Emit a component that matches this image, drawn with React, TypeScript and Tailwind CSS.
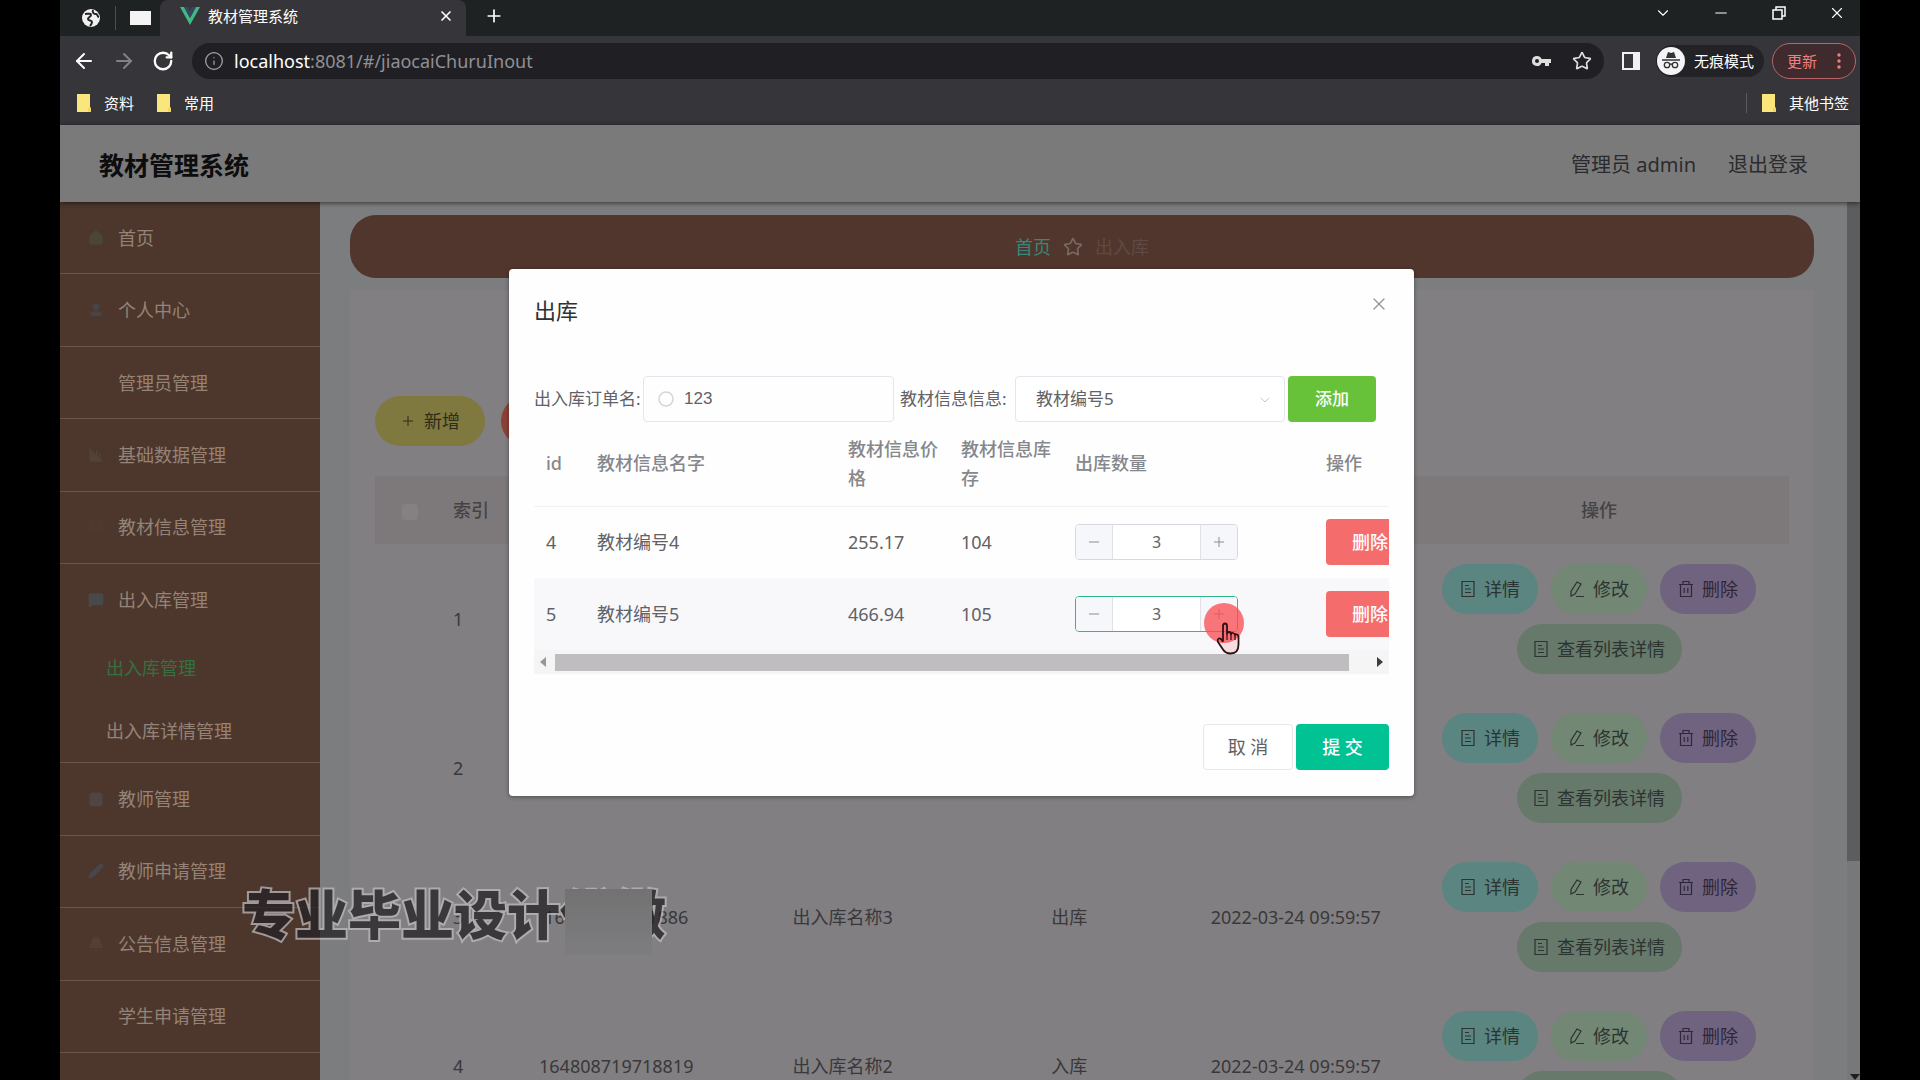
import React, { useState } from 'react';
import {
  ArrowLeft, ArrowRight, RotateCw, Info, Star, X, Plus, Minus, ChevronDown,
  House, User, ChartColumn, BookOpen, MessageSquare, Contact, Pencil, Bell,
} from 'lucide-react';

const topMenu = [
  { label: '首页', icon: House, color: 'text-[#4a4638]' },
  { label: '个人中心', icon: User, color: 'text-[#464549]' },
  { label: '管理员管理', icon: null, color: '' },
  { label: '基础数据管理', icon: ChartColumn, color: 'text-[#524336]' },
  { label: '教材信息管理', icon: BookOpen, color: 'text-[#4f392d]' },
];

const bottomMenu = [
  { label: '教师管理', icon: Contact, color: 'text-[#4d4546]' },
  { label: '教师申请管理', icon: Pencil, color: 'text-[#45484d]' },
  { label: '公告信息管理', icon: Bell, color: 'text-[#523f36]' },
  { label: '学生申请管理', icon: null, color: '' },
];

const records = [
  { id: 1, order: '', name: '', type: '', time: '' },
  { id: 2, order: '', name: '', type: '', time: '' },
  { id: 3, order: '16480871971886', name: '出入库名称3', type: '出库', time: '2022-03-24 09:59:57' },
  { id: 4, order: '164808719718819', name: '出入库名称2', type: '入库', time: '2022-03-24 09:59:57' },
];

const books = [
  { id: 4, name: '教材编号4', price: '255.17', stock: 104, active: false },
  { id: 5, name: '教材编号5', price: '466.94', stock: 105, active: true },
];

const Folder = () => (
  <svg viewBox="0 0 16 20" className="w-4 h-5" aria-hidden="true">
    <path d="M1 1h13v13l1 1v4H1z" fill="#fbe67b" />
    <path d="M12 15h3v4h-3z" fill="#f3d65c" />
  </svg>
);

const DocIcon = () => (
  <svg viewBox="0 0 16 18" className="flex-none w-4 h-[18px]" fill="none" stroke="currentColor" strokeWidth="1.2" aria-hidden="true">
    <path d="M2 1.500h12v15H2zM5 5.500h4M5 9h6M5 12.500h6" />
  </svg>
);

const EditIcon = () => (
  <svg viewBox="0 0 16 18" className="flex-none w-4 h-[18px]" fill="none" stroke="currentColor" strokeWidth="1.2" aria-hidden="true">
    <path d="M8 2l4 2-6 10-4 2V11.500zM7 16.500h8" />
  </svg>
);

const TrashIcon = () => (
  <svg viewBox="0 0 16 18" className="flex-none w-4 h-[18px]" fill="none" stroke="currentColor" strokeWidth="1.2" aria-hidden="true">
    <path d="M1 4.500h14M5 4.500v-3h6v3M2.500 4.500v12h11v-12M6.200 8v5M9.800 8v5" />
  </svg>
);

const BrowserBar = () => (
  <div className="bg-[#36363a] text-[15px] leading-5 text-white">
    {/* Tab strip */}
    <div className="flex items-center h-9 bg-[#1e2222]">
      <div className="flex items-center h-full pl-[21px]">
        <svg viewBox="0 0 20 20" className="w-5 h-5" aria-hidden="true">
          <circle cx="10" cy="10" r="9" fill="#f1f1f1" />
          <path d="M4 6c3 0 6-1 6 1s-3 2-3 4 4 1 4 3-1 3-2 4M12 2c-1 3 1 4 3 4s1 3 3 3" fill="none" stroke="#222" strokeWidth="2" />
        </svg>
        <span className="ml-[14px] w-px h-6 bg-[#4b4d4f]" />
        <svg viewBox="0 0 22 16" className="ml-[14px] w-[22px] h-4" aria-hidden="true">
          <rect x="0" y="1" width="21" height="14" fill="#f4f4f4" />
        </svg>
      </div>
      <div className="ml-2 flex items-center flex-none h-full w-[306px] pl-5 pr-3 rounded-t-lg bg-[#36363a]">
        <svg viewBox="0 0 20 18" className="w-5 h-[18px] -mt-1" aria-hidden="true">
          <path d="M0 0h4l6 11L16 0h4L10 18z" fill="#42b883" />
          <path d="M4 0h4l2 4 2-4h4l-6 11z" fill="#35495e" />
        </svg>
        <span className="ml-2 -mt-1">教材管理系统</span>
        <button aria-label="关闭标签页" className="ml-auto -mt-1"><X className="w-4 h-4" strokeWidth={2.5} /></button>
      </div>
      <button aria-label="新标签页" className="ml-[18px] -mt-1"><Plus className="w-5 h-5" /></button>
      <div className="ml-auto flex items-center gap-10 pr-[14px] pb-[10px]">
        <button aria-label="搜索标签页"><ChevronDown className="w-[18px] h-[18px]" strokeWidth={1.5} /></button>
        <button aria-label="最小化"><Minus className="w-[18px] h-[18px]" strokeWidth={1.5} /></button>
        <button aria-label="还原">
          <svg viewBox="0 0 18 18" className="w-[18px] h-[18px]" fill="none" stroke="currentColor" strokeWidth="1.5">
            <path d="M3 6h9v9H3zM6 6V3h9v9h-3" />
          </svg>
        </button>
        <button aria-label="关闭"><X className="w-[18px] h-[18px]" strokeWidth={1.5} /></button>
      </div>
    </div>

    {/* Address row */}
    <div className="flex items-center h-[50px] pl-3 pr-1">
      <button aria-label="后退"><ArrowLeft className="w-6 h-6" /></button>
      <button aria-label="前进" className="ml-4 text-[#818286]"><ArrowRight className="w-6 h-6" /></button>
      <button aria-label="重新加载" className="ml-4"><RotateCw className="w-[22px] h-[22px]" strokeWidth={2.5} /></button>
      <div className="ml-[18px] mr-[18px] flex flex-1 items-center h-9 px-3 rounded-full bg-[#202024]">
        <Info className="w-5 h-5 text-[#a5a6a9]" strokeWidth={1.5} />
        <span className="ml-[10px] text-lg leading-6 text-[#8f9094]">
          <span className="text-white">localhost</span>:8081/#/jiaocaiChuruInout
        </span>
        <svg viewBox="0 0 20 12" className="ml-auto w-5 h-3" aria-hidden="true">
          <path fillRule="evenodd" d="M5 1a5 5 0 1 0 4.600 7H13v3h4V8h2V4H9.600A5 5 0 0 0 5 1zm0 3a2 2 0 1 1 0 4 2 2 0 0 1 0-4z" fill="#dededf" />
        </svg>
        <Star className="ml-5 w-5 h-5 text-[#dededf]" />
      </div>
      <svg viewBox="0 0 18 18" className="w-[18px] h-[18px]" aria-hidden="true">
        <path fillRule="evenodd" d="M0 0h18v18H0zM2 2v14h9V2z" fill="#f1f1f3" />
      </svg>
      <div className="ml-4 flex items-center h-8 pr-[10px] rounded-full bg-[#232327]">
        <svg viewBox="0 0 30 30" className="w-[30px] h-[30px]" aria-hidden="true">
          <circle cx="15" cy="15" r="14" fill="#f4f4f6" />
          <path d="M10 12l2-6 3 1 3-1 2 6z" fill="#333" />
          <path d="M6 14h18" stroke="#333" strokeWidth="1.500" />
          <g fill="none" stroke="#333" strokeWidth="1.300">
            <circle cx="11" cy="19" r="2.700" />
            <circle cx="19" cy="19" r="2.700" />
            <path d="M13.700 18.500q1.300-1 2.600 0" />
          </g>
        </svg>
        <span className="ml-2">无痕模式</span>
      </div>
      <button className="ml-2 flex items-center justify-between h-9 w-[84px] pl-[14px] pr-[14px] rounded-full border border-[#b9656c] bg-[#3f2a2e] text-[#f0807e]">
        更新
        <svg viewBox="0 0 4 18" className="w-1 h-[18px]" fill="currentColor">
          <circle cx="2" cy="3" r="1.700" /><circle cx="2" cy="9" r="1.700" /><circle cx="2" cy="15" r="1.700" />
        </svg>
      </button>
    </div>

    {/* Bookmarks */}
    <div className="flex items-center justify-between h-[39px] pl-4 pr-[11px] pb-[6px]">
      <div className="flex items-center gap-[22px]">
        <a href="#" className="flex items-center gap-3"><Folder />资料</a>
        <a href="#" className="flex items-center gap-3"><Folder />常用</a>
      </div>
      <a href="#" className="flex items-center gap-3 pl-[14px] border-l border-[#5a5b5f]"><Folder />其他书签</a>
    </div>
  </div>
);

const MenuRow = ({ item }) => (
  <a href="#" className="flex flex-1 items-center pl-[26px] border-b border-[#6d5447]">
    <span className="flex justify-center w-5 mr-3">
      {item.icon && <item.icon className={`w-4 h-4 fill-current ${item.color}`} />}
    </span>
    {item.label}
  </a>
);

const Sidebar = () => (
  <nav className="flex-none w-[260px] bg-[#4d372d] text-lg leading-6 text-[#958377]">
    <div className="flex flex-col h-[362px]">
      {topMenu.map((item) => <MenuRow key={item.label} item={item} />)}
    </div>
    <div className="border-b border-[#6d5447]">
      <a href="#" className="flex items-center h-[72px] pl-[26px]">
        <MessageSquare className="w-5 h-4 mr-3 fill-current text-[#47494a]" />
        出入库管理
      </a>
      <a href="#" className="flex items-center h-[63px] pl-[46px] text-[#35713f]">出入库管理</a>
      <a href="#" className="flex items-center h-[63px] pl-[46px]">出入库详情管理</a>
    </div>
    <div className="flex flex-col h-[290px]">
      {bottomMenu.map((item) => <MenuRow key={item.label} item={item} />)}
    </div>
  </nav>
);

const RecordTable = () => (
  <table className="w-full table-fixed text-lg leading-6 text-center text-[#39383a]">
    <colgroup>
      <col className="w-[70px]" />
      <col className="w-[58px]" />
      <col /><col /><col /><col />
      <col className="w-[380px]" />
    </colgroup>
    <thead>
      <tr className="h-[68px] bg-[#7d797b] text-[#454244]">
        <th><input type="checkbox" aria-label="全选" className="appearance-none align-middle w-4 h-4 rounded-sm bg-[#838182]" /></th>
        <th className="pl-2 text-left font-medium">索引</th>
        <th /><th /><th /><th />
        <th className="font-medium">操作</th>
      </tr>
    </thead>
    <tbody>
      {records.map((r) => (
        <tr key={r.id} className="h-[149px]">
          <td />
          <td className="pl-2 text-left">{r.id}</td>
          <td>{r.order}</td>
          <td>{r.name}</td>
          <td>{r.type}</td>
          <td>{r.time}</td>
          <td>
            <div className="flex flex-wrap justify-center gap-x-[13px] gap-y-[10px] text-[#2c3331]">
              <button className="flex items-center justify-center gap-2 w-24 h-[50px] rounded-full bg-[#5a8581]"><DocIcon />详情</button>
              <button className="flex items-center justify-center gap-2 w-24 h-[50px] rounded-full bg-[#728774]"><EditIcon />修改</button>
              <button className="flex items-center justify-center gap-2 w-24 h-[50px] rounded-full bg-[#6f6380] text-[#2f2739]"><TrashIcon />删除</button>
              <button className="flex items-center justify-center gap-2 w-[165px] h-[50px] rounded-full bg-[#66796a]"><DocIcon />查看列表详情</button>
            </div>
          </td>
        </tr>
      ))}
    </tbody>
  </table>
);

const Content = () => (
  <main className="flex-1 min-w-0 pt-[13px] pl-[30px] pr-[33px] bg-[#7b7d7f]">
    <div className="flex items-center justify-center gap-3 h-[63px] rounded-[26px] bg-[#51362d] text-lg leading-6">
      <a href="#" className="text-[#35897a]">首页</a>
      <Star className="w-5 h-5 text-[#7b6862]" />
      <span className="text-[#5f4a43]">出入库</span>
    </div>
    <div className="mt-3 pt-[106px] px-[25px] bg-[#817f81]">
      <div className="flex gap-4 pb-[30px]">
        <button className="flex items-center justify-center gap-2 w-[110px] h-[50px] rounded-full bg-[#80793f] text-lg leading-6 text-[#2f2c1c]">
          <Plus className="w-4 h-4" strokeWidth={1.5} />新增
        </button>
        <button aria-label="删除" className="w-[110px] h-[50px] rounded-full bg-[#8b4136]" />
      </div>
      <RecordTable />
    </div>
  </main>
);

const QuantityInput = ({ active, label }) => {
  const [value, setValue] = useState(3);
  return (
    <div className={`flex h-9 w-[163px] overflow-hidden rounded border bg-white ${active ? 'border-[#2fba8c]' : 'border-[#d6d9df]'}`}>
      <button aria-label="减少" onClick={() => setValue(value - 1)} className="flex items-center justify-center flex-none w-[37px] border-r border-[#e0e2e6] bg-[#f5f7fa] text-[#8b8d91]">
        <Minus className="w-4 h-4" strokeWidth={1.5} />
      </button>
      <input aria-label={label} value={value} readOnly className="flex-1 min-w-0 pb-px text-center text-base text-[#606266]" />
      <button aria-label="增加" onClick={() => setValue(value + 1)} className="flex items-center justify-center flex-none w-[37px] border-l border-[#e0e2e6] bg-[#f5f7fa] text-[#8b8d91]">
        <Plus className="w-4 h-4" strokeWidth={1.5} />
      </button>
    </div>
  );
};

const OutboundDialog = () => (
  <div role="dialog" aria-label="出库" className="w-[905px] px-[25px] pb-[26px] rounded-sm bg-[#fefefe] text-lg leading-6 text-[#606266] shadow-[0_1px_4px_rgba(0,0,0,0.4)]">
    <div className="flex justify-between pt-[29px]">
      <h2 className="text-[22px] leading-6 text-[#303133]">出库</h2>
      <button aria-label="关闭" className="self-start -mt-1 text-[#909399]"><X className="w-5 h-5" strokeWidth={1.5} /></button>
    </div>

    <div className="flex items-center mt-[54px] text-[17px]">
      <label htmlFor="order" className="flex-none w-[109px] whitespace-nowrap">出入库订单名:</label>
      <div className="flex items-center w-[251px] h-[46px] px-3 rounded border border-[#e3e6ec]">
        <svg viewBox="0 0 20 20" className="w-5 h-5 flex-none" aria-hidden="true">
          <circle cx="10" cy="10" r="7" fill="none" stroke="#d3d5da" strokeWidth="1.500" />
        </svg>
        <input id="order" defaultValue="123" className="ml-2 w-full min-w-0 font-['Liberation_Sans']" />
      </div>
      <label htmlFor="book" className="flex-none w-[115px] ml-[6px] whitespace-nowrap">教材信息信息:</label>
      <div className="relative">
        <select id="book" className="appearance-none w-[270px] h-[46px] pl-5 rounded border border-[#e3e6ec] bg-white">
          <option>教材编号5</option>
        </select>
        <ChevronDown className="absolute right-3 top-4 w-4 h-4 text-[#c6c9cf]" strokeWidth={1.5} />
      </div>
      <button className="ml-[3px] w-[88px] h-[46px] rounded bg-[#67c23a] text-white font-medium">添加</button>
    </div>

    <div className="overflow-hidden">
      <table className="w-[920px] table-fixed text-left">
        <colgroup>
          <col className="w-[51px]" />
          <col className="w-[251px]" />
          <col className="w-[113px]" />
          <col className="w-[114px]" />
          <col className="w-[251px]" />
          <col />
        </colgroup>
        <thead>
          <tr className="h-[84px] border-b border-[#f0f1f5] text-[#85878c] leading-[29px] *:pl-3 *:font-medium">
            <th>id</th>
            <th>教材信息名字</th>
            <th>教材信息价格</th>
            <th>教材信息库存</th>
            <th>出库数量</th>
            <th>操作</th>
          </tr>
        </thead>
        <tbody>
          {books.map((book) => (
            <tr key={book.id} className={`h-[72px] *:pl-3 ${book.active ? 'bg-[#f8f8fb]' : ''}`}>
              <td>{book.id}</td>
              <td>{book.name}</td>
              <td>{book.price}</td>
              <td>{book.stock}</td>
              <td><QuantityInput active={book.active} label={`${book.name} 出库数量`} /></td>
              <td><button className="w-[88px] h-[46px] rounded bg-[#f56c6c] text-white font-medium">删除</button></td>
            </tr>
          ))}
        </tbody>
      </table>
      <div className="flex items-center h-[24px] px-[6px] bg-[#f5f5f6]">
        <svg viewBox="0 0 6 10" className="w-[6px] h-[10px] mr-[9px]"><path d="M6 0v10L0 5z" fill="#97979a" /></svg>
        <div className="flex-1 mr-7 h-[17px] bg-[#bfbdc0]" />
        <svg viewBox="0 0 6 10" className="w-[6px] h-[10px]"><path d="M0 0v10l6-5z" fill="#3c3c3e" /></svg>
      </div>
    </div>

    <div className="flex justify-end gap-[3px] mt-[50px]">
      <button className="w-[90px] h-[46px] rounded border border-[#e6e8ee] bg-white">取 消</button>
      <button className="w-[93px] h-[46px] rounded bg-[#00c292] text-white font-medium">提 交</button>
    </div>
  </div>
);

export default function App() {
  return (
    <div className="h-screen overflow-hidden px-[60px] bg-black font-['Noto_Sans','Noto_Sans_CJK_SC',sans-serif]">
      <div className="relative flex flex-col h-full overflow-hidden">
        <BrowserBar />
        <header className="relative flex flex-none items-center h-[77px] px-[39px] pr-[52px] pt-[2px] bg-[#7a7a7b] shadow-[0_1px_5px_rgba(0,0,0,0.6)]">
          <h1 className="text-[25px] leading-8 font-bold text-[#0d0d0e]">教材管理系统</h1>
          <span className="ml-auto text-xl leading-6 text-[#2b2b2d]">管理员 admin</span>
          <button className="ml-8 text-xl leading-6 text-[#2b2b2d]">退出登录</button>
        </header>
        <div className="flex flex-1 min-h-0">
          <Sidebar />
          <Content />
          <div className="flex flex-col flex-none w-[13px] bg-[#777879]">
            <div className="h-3/4 bg-[#5c5d5d]" />
            <svg viewBox="0 0 10 6" className="w-[10px] h-[6px] mt-auto ml-[3px]"><path d="M0 0h10L5 6z" fill="#1f1f20" /></svg>
          </div>
        </div>

        {/* Dialog layer */}
        <div className="absolute inset-0 flex items-start justify-center pt-[269px] pl-[3px]">
          <OutboundDialog />
        </div>

        {/* Click marker and pointer */}
        <div className="absolute left-[1144px] top-[603px] w-10 h-10 rounded-full bg-[#f9494f]/75" />
        <svg viewBox="0 0 26 34" className="absolute left-[1155px] top-[622px] w-[26px] h-[34px]">
          <path d="M8 19V4q0-2.500 2-2.500T12 4v8q0-2 2-2t2 2.500q0-2 2-1.500t2 2.500q0-2 2-1t1.500 3v7q0 9-8 9-5 0-7.500-4L3 20q-1-3 1-3.500T8 20" fill="#f9494f" fillOpacity="0.15" stroke="#2c1215" strokeWidth="1.800" strokeLinejoin="round" />
          <path d="M12 12v6M16 13v5M20 14v4" stroke="#6b1a20" strokeWidth="1.500" />
        </svg>

        {/* Watermark */}
        <div className="absolute left-[182px] top-[880px]">
          <p className="text-[53px] leading-[70px] font-black text-[#242125] opacity-75 whitespace-nowrap [-webkit-text-stroke:4px_#bdbabc] [paint-order:stroke_fill]">专业毕业设计代做</p>
          <div className="absolute right-[14px] top-[9px] w-[87px] h-[66px] bg-linear-to-b from-[#727273] to-[#7d7c7e]" />
        </div>
      </div>
    </div>
  );
}
